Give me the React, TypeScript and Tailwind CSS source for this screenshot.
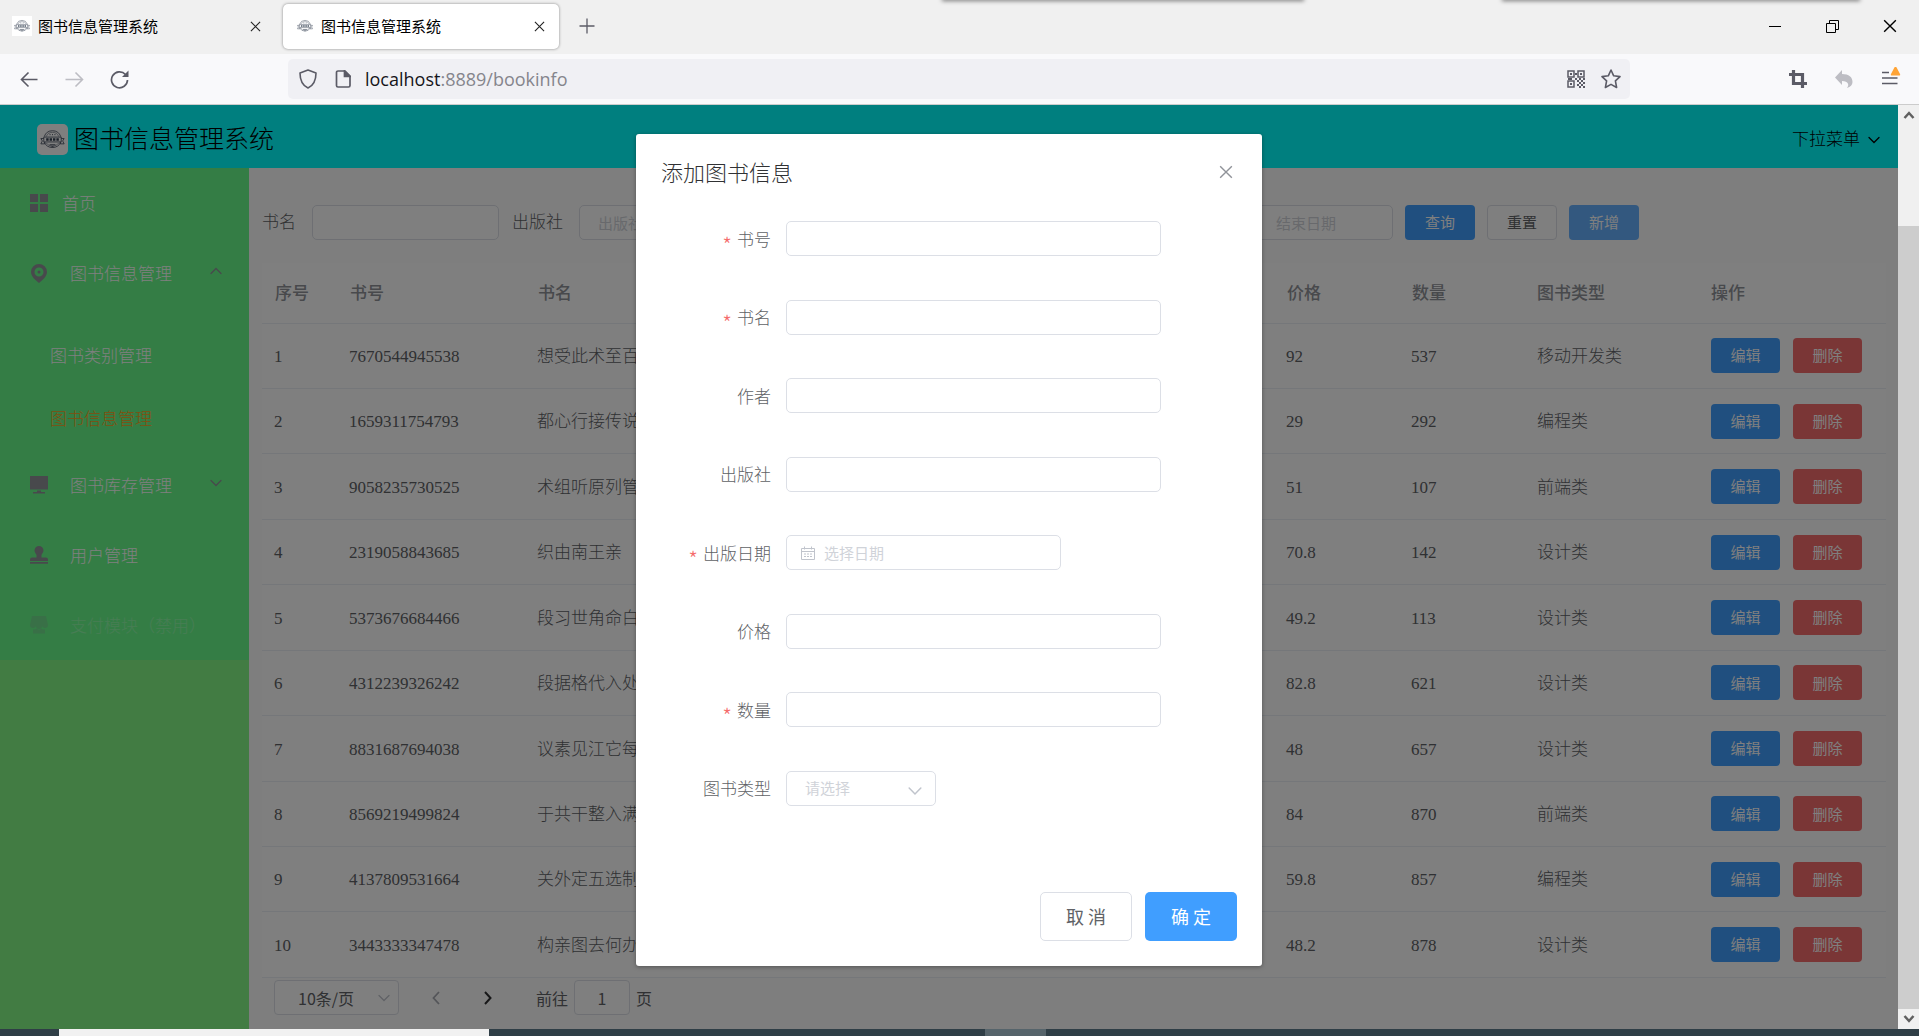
import React, { useState } from 'react';

const sans = "font-['Noto_Sans_CJK_SC',sans-serif]";
const serif = "font-['Liberation_Serif','Noto_Sans_CJK_SC',serif]";

interface Book {
  isbn: string;
  name: string;
  price: string;
  count: number;
  type: string;
}

const books: Book[] = [
  { isbn: '7670544945538', name: '想受此术至百', price: '92', count: 537, type: '移动开发类' },
  { isbn: '1659311754793', name: '都心行接传说', price: '29', count: 292, type: '编程类' },
  { isbn: '9058235730525', name: '术组听原列管', price: '51', count: 107, type: '前端类' },
  { isbn: '2319058843685', name: '织由南王亲', price: '70.8', count: 142, type: '设计类' },
  { isbn: '5373676684466', name: '段习世角命白', price: '49.2', count: 113, type: '设计类' },
  { isbn: '4312239326242', name: '段据格代入处', price: '82.8', count: 621, type: '设计类' },
  { isbn: '8831687694038', name: '议素见江它每', price: '48', count: 657, type: '设计类' },
  { isbn: '8569219499824', name: '于共干整入满', price: '84', count: 870, type: '前端类' },
  { isbn: '4137809531664', name: '关外定五选制', price: '59.8', count: 857, type: '编程类' },
  { isbn: '3443333347478', name: '构亲图去何办', price: '48.2', count: 878, type: '设计类' },
];

const Chevron: React.FC<{ className?: string; up?: boolean }> = ({ className, up }) => (
  <svg viewBox="0 0 12 12" className={className} fill="none" stroke="currentColor" strokeWidth="1.3" strokeLinecap="round">
    <path d={up ? 'M1 8.5 6 3.5l5 5' : 'M1 3.5l5 5 5-5'} />
  </svg>
);

const Cross: React.FC<{ className?: string }> = ({ className }) => (
  <svg viewBox="0 0 12 12" className={className} fill="none" stroke="currentColor" strokeWidth="1.2">
    <path d="M1 1l10 10M11 1L1 11" />
  </svg>
);

// 徽章 logo
const Logo: React.FC<{ className?: string }> = ({ className }) => (
  <svg viewBox="0 0 32 32" className={className} fill="none" stroke="currentColor" strokeWidth=".8">
    <path d="M7.500 13a9 9 0 0 1 17 0M7.500 19a9.500 9.500 0 0 0 17 0" />
    <path d="M9.500 13a7 7 0 0 1 13 0M9.500 19.500a8 8 0 0 0 13 0" strokeWidth=".5" />
    <path d="M7 13.500h18v5H7z" />
    <path d="M7 15H4l1.500 2.500L4 20.500h4v-2M25 15h3l-1.500 2.500 1.500 3h-4v-2" />
    <path d="M9.500 16h2.500M13 16h2.500M16.500 16h2.500M20 16h2.500" strokeWidth="2.600" />
    <path d="M13 11h1M15.500 11h1M18 11h1M13 21.500h6M15 23.500h2" strokeWidth="1" />
  </svg>
);

const CalendarIcon: React.FC<{ className?: string }> = ({ className }) => (
  <svg viewBox="0 0 14 14" className={className} fill="none" stroke="currentColor">
    <path d="M.5 2.500h13v11H.5zM.5 5.500h13M3.500.5v3M10.500.5v3" />
    <path d="M3 8h2M6 8h2M9 8h2M3 10.500h2M6 10.500h2M9 10.500h2" />
  </svg>
);

const BrowserTab: React.FC<{ active?: boolean }> = ({ active }) => (
  <div
    className={
      active
        ? 'flex h-[45px] w-[276px] items-center rounded-[5px] bg-white px-3 shadow-[0_0_3px_rgba(0,0,0,0.45)]'
        : 'flex h-[45px] w-[275px] items-center px-3'
    }
  >
    <span className="mr-1.5 bg-white">
      <Logo className="h-5 w-5 text-gray-600" />
    </span>
    <span className="flex-1 text-[15px] text-black">图书信息管理系统</span>
    <button aria-label="关闭标签页" className="mr-0.5">
      <Cross className="h-[11px] w-[11px] text-[#222]" />
    </button>
  </div>
);

const BrowserChrome: React.FC = () => (
  <div className={`${sans} shrink-0`}>
    <div className="relative flex h-[54px] items-center bg-[#f0f0f0] pr-[22px] pb-0.5">
      <div className="absolute -top-1 left-[942px] h-1 w-[362px] shadow-[0_1px_4px_rgba(0,0,0,0.5)]" />
      <div className="absolute -top-1 left-[1502px] h-1 w-[358px] shadow-[0_1px_4px_rgba(0,0,0,0.5)]" />
      <BrowserTab />
      <div className="w-2" />
      <BrowserTab active />
      <button aria-label="新建标签页" className="ml-5">
        <svg viewBox="0 0 16 16" className="h-4 w-4" stroke="#5b5b66" strokeWidth="1.3">
          <path d="M8 .5v15M.5 8h15" />
        </svg>
      </button>
      <div className="ml-auto flex items-center gap-11 text-black">
        <button aria-label="最小化">
          <svg viewBox="0 0 13 13" className="h-[13px] w-[13px]" stroke="currentColor">
            <path d="M0 6.500h12" />
          </svg>
        </button>
        <button aria-label="还原">
          <svg viewBox="0 0 13 13" className="h-[13px] w-[13px]" fill="none" stroke="currentColor">
            <path d="M.5 3.500h9v9h-9zM3.500 3.500v-3h9v9h-3" />
          </svg>
        </button>
        <button aria-label="关闭">
          <Cross className="h-[14px] w-[14px]" />
        </button>
      </div>
    </div>

    <div className="flex h-[51px] items-center border-b border-[#ccc] bg-[#f9f9fb] pr-[18px] pl-5 text-[#5b5b66]">
      <div className="flex w-[268px] items-center gap-[26px]">
        <button aria-label="后退">
          <svg viewBox="0 0 19 19" className="h-[19px] w-[19px]" fill="none" stroke="currentColor" strokeWidth="1.6">
            <path d="M17.500 9.500H1.500M8.500 2.500L1.500 9.500l7 7" />
          </svg>
        </button>
        <button aria-label="前进">
          <svg viewBox="0 0 19 19" className="h-[19px] w-[19px]" fill="none" stroke="#bdbdc3" strokeWidth="1.6">
            <path d="M.5 9.500h17M10.500 2.500l7 7-7 7" />
          </svg>
        </button>
        <button aria-label="刷新">
          <svg viewBox="0 0 19 19" className="h-[19px] w-[19px]" fill="none" stroke="currentColor" strokeWidth="1.7">
            <path d="M15.500 4.500A8 8 0 1 0 17.500 10" />
            <path d="M18.500.5v6.500H12z" fill="currentColor" stroke="none" />
          </svg>
        </button>
      </div>
      <div className="flex h-10 w-[1342px] min-w-0 items-center rounded-[5px] bg-[#f0f0f4] pr-[9px] pl-[11px]">
        <svg viewBox="0 0 18 20" className="h-5 w-[18px]" fill="none" stroke="currentColor" strokeWidth="1.6">
          <path d="M9 1l8 3c0 7-2.500 12.500-8 15C3.500 16.500 1 11 1 4z" strokeLinejoin="round" />
        </svg>
        <svg viewBox="0 0 16 18" className="ml-[18px] h-[18px] w-4" fill="none" stroke="currentColor" strokeWidth="1.7">
          <path d="M3 1h7l5 5v9.500a1.500 1.500 0 0 1-1.500 1.500H3a1.500 1.500 0 0 1-1.500-1.500v-13A1.500 1.500 0 0 1 3 1z" />
          <path d="M9.500 1v5.500H15z" fill="currentColor" />
        </svg>
        <span className="ml-[14px] flex-1 font-['Open_Sans',sans-serif] text-[18px] text-[#85858c]">
          <span className="text-[#15141a]">localhost</span>:8889/bookinfo
        </span>
        <svg viewBox="0 0 18 18" className="h-[18px] w-[18px]" fill="none" stroke="currentColor" strokeWidth="1.500">
          <path d="M1 1h6v6H1zM11 1h6v6h-6zM1 11h6v6H1z" />
          <path d="M3 4h2M13 4h2M3 14h2M8 4h2M8 9h2M1 9h4M12 9h2M16 9h2M10 11h2M14 11h2M12 13h2M16 13h2M10 15h2M14 15h2M12 17h2M16 17h2" strokeWidth="2" />
        </svg>
        <svg viewBox="0 0 20 20" className="ml-4 h-5 w-5" fill="none" stroke="currentColor" strokeWidth="1.6" strokeLinejoin="round">
          <path d="M10 1l2.700 5.800 6.300.8-4.600 4.300 1.200 6.600L10 15.400l-5.600 3.100 1.200-6.600L1 7.600l6.300-.8z" />
        </svg>
      </div>
      <div className="ml-auto flex items-center gap-7">
        <svg viewBox="0 0 18 18" className="h-[18px] w-[18px]" fill="none" stroke="currentColor" strokeWidth="3.200">
          <path d="M4.500 0v13.500H18M0 4.500h13.500V18" />
        </svg>
        <svg viewBox="0 0 18 18" className="h-[18px] w-[18px]" fill="#bdbdc3">
          <path d="M7 0v4c7 0 10.500 3 10.500 8 0 3-2 5-5.500 6 2.500-3 1.500-7-5-7v4L0 7.500z" />
        </svg>
        <svg viewBox="0 0 20 24" className="h-6 w-5" fill="none" stroke="currentColor" strokeWidth="1.6">
          <path d="M1 5.500h7M1 11h15.500M1 16.500h15.500" />
          <path d="M14.500-1c.8 0 1.200.5 1.500 1.200L19 6c.5 1 0 1.500-1 1.500h-7c-1 0-1.500-.5-1-1.500L13 .2c.3-.7.7-1.200 1.500-1.200z" transform="translate(0 1)" fill="#ffa436" stroke="none" />
        </svg>
      </div>
    </div>
  </div>
);

const menuIcons = {
  home: (
    <path d="M0 0h8v8H0zM10 0h8v8h-8zM0 10h8v8H0zM10 10h8v8h-8z" />
  ),
  location: (
    <path
      fillRule="evenodd"
      d="M9 0a8 8 0 0 1 8 8c0 4-4 8-8 11C5 16 1 12 1 8a8 8 0 0 1 8-8zm0 3.500a4.500 4.500 0 1 0 0 9 4.500 4.500 0 0 0 0-9zM9 6.500a1.500 1.500 0 1 1 0 3 1.500 1.500 0 0 1 0-3z"
    />
  ),
  platform: <path d="M0 0h18v13.500H0zM7 14.500h4V16h4v1.500H3V16h4z" />,
  user: (
    <path d="M9 0a4.500 4.500 0 0 1 4.500 4.500c0 2-1.500 3-2 4.500v2.500H16a2 2 0 0 1 2 2V15H0v-1.500a2 2 0 0 1 2-2h4.500V9c-.5-1.500-2-2.500-2-4.500A4.500 4.500 0 0 1 9 0zM0 16h18v1.800H0z" />
  ),
  shop: (
    <path d="M2 0h14l2 9a3 3 0 0 1-3 3 3 3 0 0 1-3-2 3 3 0 0 1-6 0 3 3 0 0 1-3 2 3 3 0 0 1-3-3zM3 13.500c2 0 3 0 3.500-1 1.500 1.500 3.500 1.500 5 0 .5 1 1.500 1 3.500 1v4H3z" />
  ),
};

interface MenuItemProps {
  icon: keyof typeof menuIcons;
  label: string;
  arrow?: 'up' | 'down';
  wide?: boolean;
  disabled?: boolean;
}

const MenuItem: React.FC<MenuItemProps> = ({ icon, label, arrow, wide, disabled }) => (
  <a
    href="#"
    aria-disabled={disabled}
    className={`flex h-[70px] items-center pr-[27px] pl-[30px] ${disabled ? 'opacity-25' : ''}`}
  >
    <svg viewBox="0 0 18 19" className="h-[19px] w-[18px] text-[#909399]" fill="currentColor">
      {menuIcons[icon]}
    </svg>
    <span className={`${wide ? 'ml-[22px]' : 'ml-[14px]'} flex-1 pt-[3px] whitespace-nowrap`}>{label}</span>
    {arrow && <Chevron up={arrow === 'up'} className="mb-1 h-3 w-3 text-[#909399]" />}
  </a>
);

const Sidebar: React.FC = () => (
  <aside className="w-[249px] shrink-0 bg-[#84f987] text-[17px] font-light text-white">
    <nav className="bg-[#68fb8b]">
      <MenuItem icon="home" label="首页" />
      <MenuItem icon="location" label="图书信息管理" arrow="up" wide />
      <div className="pt-4">
        <a href="#" className="flex h-[63px] items-center pt-0.5 pl-[50px]">图书类别管理</a>
        <a href="#" className="flex h-[63px] items-center pt-0.5 pl-[50px] text-[#ff9f20]">图书信息管理</a>
      </div>
      <MenuItem icon="platform" label="图书库存管理" arrow="down" wide />
      <MenuItem icon="user" label="用户管理" wide />
      <MenuItem icon="shop" label="支付模块（禁用）" wide disabled />
    </nav>
  </aside>
);

const inputCls = 'h-[35px] rounded-[5px] border border-[#dcdfe6] bg-white text-[15px] text-[#606266] placeholder:text-[#d0d3d9]';

const SearchBar: React.FC<{ onAdd: () => void }> = ({ onAdd }) => (
  <form className="mb-[23px] flex items-center text-[17px] text-[#606266]">
    <label htmlFor="q-name" className="w-[50px] shrink-0 font-light">书名</label>
    <input id="q-name" className={`${inputCls} ${sans} w-[187px] px-[18px]`} />
    <label htmlFor="q-press" className="ml-[13px] w-[67px] shrink-0 font-light">出版社</label>
    <input id="q-press" placeholder="出版社" className={`${inputCls} ${sans} w-[187px] px-[18px]`} />
    <input aria-label="开始日期" className={`${inputCls} ${sans} ml-[13px] w-[446px] px-9`} />
    <input aria-label="结束日期" placeholder="结束日期" className={`${inputCls} ${sans} ml-[13px] w-[155px] pl-[37px]`} />
    <div className={`${sans} ml-3 flex gap-3 text-[15px]`}>
      <button type="button" className="h-[35px] w-[70px] rounded-[4px] bg-[#409eff] text-white">查询</button>
      <button type="reset" className="h-[35px] w-[70px] rounded-[4px] border border-[#dcdfe6] bg-white">重置</button>
      <button type="button" onClick={onAdd} className="h-[35px] w-[70px] rounded-[4px] bg-[#66b1ff] text-white">新增</button>
    </div>
  </form>
);

const BookTable: React.FC = () => (
  <table className="h-[715px] w-full table-fixed border-collapse bg-white text-left text-[17px] text-[#606266]">
    <colgroup>
      <col className="w-[75px]" />
      <col className="w-[188px]" />
      <col />
      <col className="w-[125px]" />
      <col className="w-[125px]" />
      <col className="w-[174px]" />
      <col className="w-[188px]" />
    </colgroup>
    <thead>
      <tr className="h-[60px] border-b border-[#ebeef5] text-[#909399]">
        {['序号', '书号', '书名', '价格', '数量', '图书类型', '操作'].map((h) => (
          <th key={h} className="px-[13px] pt-0.5 font-medium">{h}</th>
        ))}
      </tr>
    </thead>
    <tbody className="font-light">
      {books.map((b, i) => (
        <tr key={b.isbn} className="border-b border-[#ebeef5]">
          <td className="px-3 pt-0.5">{i + 1}</td>
          <td className="px-3 pt-0.5">{b.isbn}</td>
          <td className="px-3 pt-0.5">{b.name}</td>
          <td className="px-3 pt-0.5">{b.price}</td>
          <td className="px-3 pt-0.5">{b.count}</td>
          <td className="px-[13px] pt-0.5">{b.type}</td>
          <td className="px-[13px]">
            <div className={`${sans} flex gap-[13px] text-[15px] font-normal text-white`}>
              <button className="h-[35px] w-[69px] rounded-[4px] bg-[#409eff]">编辑</button>
              <button className="h-[35px] w-[69px] rounded-[4px] bg-[#f56c6c]">删除</button>
            </div>
          </td>
        </tr>
      ))}
    </tbody>
  </table>
);

const Pagination: React.FC = () => (
  <div className={`${sans} mt-0.5 flex items-center pl-3 text-[16px] text-[#606266]`}>
    <div className="relative">
      <select aria-label="每页条数" className="h-[35px] w-[125px] appearance-none rounded-[4px] border border-[#dcdfe6] bg-white pl-[23px]">
        <option>10条/页</option>
        <option>20条/页</option>
      </select>
      <Chevron className="pointer-events-none absolute top-3 right-[9px] h-3 w-3 text-[#c0c4cc]" />
    </div>
    <button aria-label="上一页" disabled className="ml-[30px] text-[#a8abb2]">
      <svg viewBox="0 0 14 14" className="h-[14px] w-[14px]" fill="none" stroke="currentColor" strokeWidth="1.8">
        <path d="M10 1L4.500 7l5.500 6" />
      </svg>
    </button>
    <button aria-label="下一页" className="ml-[38px] text-[#303133]">
      <svg viewBox="0 0 14 14" className="h-[14px] w-[14px]" fill="none" stroke="currentColor" strokeWidth="2">
        <path d="M4 1l5.500 6L4 13" />
      </svg>
    </button>
    <label htmlFor="page" className="ml-[41px]">前往</label>
    <input id="page" defaultValue="1" className="mx-[6px] h-[35px] w-14 rounded-[4px] border border-[#dcdfe6] bg-white text-center" />
    <span>页</span>
  </div>
);

interface FieldProps {
  id: string;
  label: string;
  required?: boolean;
  children?: React.ReactNode;
}

const Field: React.FC<FieldProps> = ({ id, label, required, children }) => (
  <div className="flex items-center">
    <label htmlFor={id} className="flex h-[35px] w-[125px] items-center justify-end pr-[15px] text-[17px] leading-8 font-light text-[#606266]">
      {required && <span className="mr-[5px] pt-2.5 text-[22px] text-[#f56c6c]">*</span>}
      {label}
    </label>
    {children ?? <input id={id} className={`${inputCls} w-[375px] px-[18px]`} />}
  </div>
);

const AddDialog: React.FC<{ onClose: () => void }> = ({ onClose }) => (
  <div className="absolute inset-0 flex items-start justify-center bg-black/50 pt-[29px]">
    <div
      role="dialog"
      aria-label="添加图书信息"
      className={`${sans} flex h-[832px] w-[626px] flex-col rounded-[3px] bg-white p-[25px] shadow-[0_1px_4px_rgba(0,0,0,0.35)]`}
    >
      <div className="mb-[37px] flex h-[25px] items-center justify-between">
        <h2 className="text-[22px] font-light text-[#303133]">添加图书信息</h2>
        <button aria-label="关闭" onClick={onClose} className="mr-1 text-[#909399]">
          <Cross className="h-[14px] w-[14px]" />
        </button>
      </div>
      <form className="flex flex-1 flex-col justify-between">
        <Field id="isbn" label="书号" required />
        <Field id="name" label="书名" required />
        <Field id="author" label="作者" />
        <Field id="press" label="出版社" />
        <Field id="date" label="出版日期" required>
          <div className="relative">
            <input id="date" placeholder="选择日期" className={`${inputCls} w-[275px] pl-[37px]`} />
            <CalendarIcon className="absolute top-[11px] left-[15px] h-[14px] w-[14px] text-[#c0c4cc]" />
          </div>
        </Field>
        <Field id="price" label="价格" />
        <Field id="count" label="数量" required />
        <Field id="type" label="图书类型">
          <div className="relative">
            <select id="type" className="h-[35px] w-[150px] appearance-none rounded-[5px] border border-[#dcdfe6] bg-white pl-[18px] text-[15px] text-[#d0d3d9]">
              <option>请选择</option>
              <option>编程类</option>
              <option>前端类</option>
              <option>设计类</option>
              <option>移动开发类</option>
            </select>
            <Chevron className="pointer-events-none absolute top-[13px] right-[14px] h-[14px] w-[14px] text-[#c0c4cc]" />
          </div>
        </Field>
      </form>
      <div className="mt-[86px] flex justify-end gap-[13px] text-[18px]">
        <button onClick={onClose} className="h-[49px] w-[92px] rounded-[5px] border border-[#dcdfe6] bg-white text-[#606266]">取 消</button>
        <button onClick={onClose} className="h-[49px] w-[92px] rounded-[5px] bg-[#409eff] text-white">确 定</button>
      </div>
    </div>
  </div>
);

const ScrollBar: React.FC = () => (
  <div className="flex w-[21px] shrink-0 flex-col items-center bg-[#f0f0f0] text-[#606060]">
    <svg viewBox="0 0 12 12" className="my-1 h-3 w-3" fill="none" stroke="currentColor" strokeWidth="2.500">
      <path d="M1.500 9L6 4l4.500 5" />
    </svg>
    <div className="mt-[101px] w-full flex-1 bg-[#cdcdcd]" />
    <svg viewBox="0 0 12 12" className="my-1 h-3 w-3" fill="none" stroke="currentColor" strokeWidth="2.500">
      <path d="M1.500 3L6 8l4.500-5" />
    </svg>
  </div>
);

export default function App() {
  const [dialogOpen, setDialogOpen] = useState(true);

  return (
    <div className="flex h-screen flex-col overflow-hidden">
      <BrowserChrome />
      <div className="flex min-h-0 flex-1">
        <div className={`${serif} relative flex min-w-0 flex-1 flex-col overflow-hidden`}>
          <header className="flex h-[63px] shrink-0 items-center justify-between bg-[#00ffff] pt-1.5 pr-[18px] pl-[37px] text-black">
            <div className="flex items-center gap-1.5">
              <span className="rounded-[5px] bg-white">
                <Logo className="h-[31px] w-[31px] text-gray-700" />
              </span>
              <h1 className="text-[25px] leading-8 font-light">图书信息管理系统</h1>
            </div>
            <button className="flex items-center gap-2 text-[17px] font-light">
              下拉菜单
              <Chevron className="h-3 w-3" />
            </button>
          </header>
          <div className="flex min-h-0 flex-1">
            <Sidebar />
            <main className="min-w-0 flex-1 bg-[#fdfdfd] pt-[37px] pr-3 pl-[13px]">
              <SearchBar onAdd={() => setDialogOpen(true)} />
              <BookTable />
              <Pagination />
            </main>
          </div>
          {dialogOpen && <AddDialog onClose={() => setDialogOpen(false)} />}
        </div>
        <ScrollBar />
      </div>
      {/* 任务栏 */}
      <div className="flex h-[7px] shrink-0 bg-[#2f3e46] pl-[59px]">
        <div className="w-[430px] bg-[#f1f1f1]" />
        <div className="ml-[496px] w-[61px] bg-[#56646b]" />
      </div>
    </div>
  );
}
